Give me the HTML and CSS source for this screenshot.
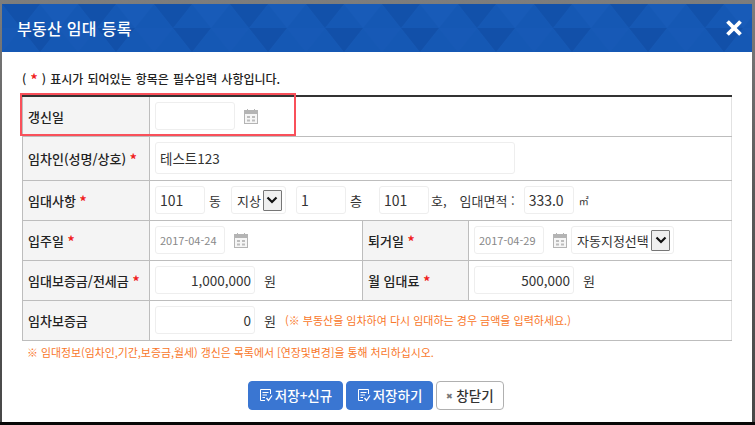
FILE: index.html
```html
<!DOCTYPE html>
<html lang="ko">
<head>
<meta charset="utf-8">
<title>부동산 임대 등록</title>
<link rel="stylesheet" href="styles.css">
</head>
<body>
<div class="modal">
  <header class="head">
    <svg class="head-bg" width="750" height="48" viewBox="0 0 750 48" aria-hidden="true">
      <defs>
        <pattern id="tri" width="76" height="48" patternUnits="userSpaceOnUse">
          <path d="M0 0H38L19 24Z" fill="#1251aa"/>
          <path d="M38 0H76L57 24Z" fill="#185bb8"/>
          <path d="M19 24H57L38 48Z" fill="#1250a9"/>
          <path d="M57 24H95L76 48Z" fill="#1759b6"/>
          <path d="M-19 24H19L0 48Z" fill="#1759b6"/>
        </pattern>
      </defs>
      <rect width="750" height="48" fill="url(#tri)"/>
    </svg>
    <h1 class="title">부동산 임대 등록</h1>
    <svg class="close" width="18" height="18" viewBox="0 0 18 18" aria-label="닫기"><path d="M3 3L15 15M15 3L3 15" stroke="#fff" stroke-width="4.4" stroke-linecap="square" fill="none" transform="translate(9 9) scale(.86) translate(-9 -9)"/></svg>
  </header>
  <div class="body">
    <p class="notice">( <span class="req">*</span> ) 표시가 되어있는 항목은 필수입력 사항입니다.</p>
    <div class="highlight"></div>
    <table class="form">
      <colgroup><col class="c1"><col class="c2"><col class="c3"><col class="c4"></colgroup>
      <tr class="r1">
        <th>갱신일</th>
        <td colspan="3"><span class="field"><input class="in w80" type="text"><svg class="cal" width="14" height="15" viewBox="0 0 14 15"><use href="#calicon"/></svg></span></td>
      </tr>
      <tr class="r2">
        <th>임차인(성명/상호) <span class="req">*</span></th>
        <td colspan="3"><input class="in wname" type="text" value="테스트123"></td>
      </tr>
      <tr>
        <th>임대사항 <span class="req">*</span></th>
        <td colspan="3">
          <span class="field">
            <input class="in w50" type="text" value="101"><span class="unit u5">동</span>
            <span class="sel s1"><span class="sel-t">지상</span><span class="arrow"><svg width="12" height="8" viewBox="0 0 12 8"><path d="M1.5 1.5L6 6L10.5 1.5" stroke="#111" stroke-width="2.2" fill="none"/></svg></span></span>
            <input class="in w50 ml10" type="text" value="1"><span class="unit u5">층</span>
            <input class="in w50 ml14" type="text" value="101"><span class="unit u2">호,</span><span class="unit u3">임대면적 :</span>
            <input class="in w50 ml8" type="text" value="333.0"><span class="unit u4">㎡</span>
          </span>
        </td>
      </tr>
      <tr>
        <th>입주일 <span class="req">*</span></th>
        <td><span class="field"><input class="in w70 date" type="text" value="2017-04-24"><svg class="cal" width="14" height="15" viewBox="0 0 14 15"><use href="#calicon"/></svg></span></td>
        <th>퇴거일 <span class="req">*</span></th>
        <td><span class="field"><input class="in w70 date" type="text" value="2017-04-29"><svg class="cal cal2" width="14" height="15" viewBox="0 0 14 15"><use href="#calicon"/></svg><span class="sel s2"><span class="sel-t">자동지정선택</span><span class="arrow"><svg width="12" height="8" viewBox="0 0 12 8"><path d="M1.5 1.5L6 6L10.5 1.5" stroke="#111" stroke-width="2.2" fill="none"/></svg></span></span></span></td>
      </tr>
      <tr>
        <th>임대보증금/전세금 <span class="req">*</span></th>
        <td><span class="field"><input class="in w100 num" type="text" value="1,000,000"><span class="unit u1">원</span></span></td>
        <th>월 임대료 <span class="req">*</span></th>
        <td><span class="field"><input class="in w100 num" type="text" value="500,000"><span class="unit u1">원</span></span></td>
      </tr>
      <tr>
        <th>임차보증금</th>
        <td colspan="3"><span class="field"><input class="in w100 num" type="text" value="0"><span class="unit u1">원</span><span class="hint">(※ 부동산을 임차하여 다시 임대하는 경우 금액을 입력하세요.)</span></span></td>
      </tr>
    </table>
    <p class="warn">※ 임대정보(임차인,기간,보증금,월세) 갱신은 목록에서 [연장및변경]을 통해 처리하십시오.</p>
    <div class="actions">
      <button class="btn primary w112" type="button"><svg class="bi" width="14" height="14" viewBox="0 0 14 14"><use href="#noteicon"/></svg>저장+신규</button>
      <button class="btn primary w87" type="button"><svg class="bi" width="14" height="14" viewBox="0 0 14 14"><use href="#noteicon"/></svg>저장하기</button>
      <button class="btn ghost" type="button"><span class="x">✖</span>창닫기</button>
    </div>
  </div>
</div>
<svg class="defs" width="0" height="0" aria-hidden="true">
  <defs>
    <g id="calicon">
      <rect x=".5" y="1.5" width="13" height="13" fill="#f6f6f6" stroke="#b4b4b4"/>
      <rect x="1" y="2" width="12" height="3" fill="#b4b4b4"/>
      <rect x="3" y="0" width="1" height="2" fill="#b4b4b4"/><rect x="10" y="0" width="1" height="2" fill="#b4b4b4"/>
      <path d="M3 7h3v2H3zM8 7h3v2H8zM3 10.500h3v2H3zM8 10.500h3v2H8z" fill="#bdbdbd"/>
    </g>
    <g id="noteicon" fill="none" stroke="#fff" stroke-width="1">
      <path d="M11.500 6V1.500H1.500V12.500H6"/>
      <path d="M3.500 4.500H9.500M3.500 7H8M3.500 9.500H6"/>
      <path d="M7.500 10L9.500 12.500L13 7.500" stroke-width="1.300"/>
    </g>
  </defs>
</svg>
</body>
</html>
```

FILE: styles.css
```css
* { box-sizing: border-box; }
html, body { margin: 0; padding: 0; height: 100%; }
body {
  width: 755px;
  height: 425px;
  overflow: hidden;
  background: linear-gradient(to bottom, #7d7d7d 0, #5a5a5a 45%, #484848 100%);
  padding: 4px 3px 3px 2px;
  font-family: "Noto Sans CJK KR", "Noto Sans", sans-serif;
  color: #222;
  box-shadow: inset 0 -3px 0 #080808;
}
.modal { width: 750px; height: 418px; background: #fff; }
.head {
  position: relative;
  height: 48px;
  background: #1558b4;
  display: flex;
  align-items: center;
  justify-content: space-between;
  padding: 0 9px 0 15px;
  overflow: hidden;
}
.head-bg { position: absolute; left: 0; top: 0; }
.title { position: relative; margin: 0; font-size: 16px; font-weight: 500; color: #fff; letter-spacing: .3px; }
.close { position: relative; }
.body { position: relative; padding: 0 20px; }
.notice { margin: 0; padding-top: 17px; height: 43px; font-size: 12px; line-height: 20px; font-weight: 500; color: #222; word-spacing: .8px; }
.req { color: #f01c1c; font-weight: 700; font-size: 14px; line-height: 1; vertical-align: -1px; }
.highlight { position: absolute; left: 18px; top: 41px; width: 276px; height: 43px; border: 2px solid #f9505a; pointer-events: none; z-index: 2; }
.form { width: 710px; border-collapse: collapse; table-layout: fixed; border-top: 2px solid #333; }
.c1 { width: 127px; }
.c2 { width: 213px; }
.c3 { width: 106px; }
.form tr { height: 40px; }
.form tr.r1 { height: 40px; }
.form tr.r2 { height: 44px; }
.form th, .form td { border: 1px solid #bdbdbd; padding: 0 5px; font-size: 13px; vertical-align: middle; }
.form td:last-child { border-right-color: #e2e2e2; }
.form tr:first-child th, .form tr:first-child td { border-top: 0; }
.form th { background: #f4f4f4; text-align: left; font-weight: 500; color: #222; padding-left: 5px; white-space: nowrap; font-size: 13px; }
.field { display: flex; align-items: center; white-space: nowrap; }
.in {
  display: block;
  height: 28px;
  border: 1px solid #eeeeee;
  border-radius: 3px;
  background: #fff;
  padding: 0 4px;
  font: 13.500px "Noto Sans CJK KR", "Noto Sans", sans-serif;
  color: #333;
  outline: 0;
}
.w80 { width: 80px; }
.wname { width: 360px; height: 32px; }
.w50 { width: 50px; font-size: 14px; }
.w70 { width: 70px; font-size: 11px; color: #888; padding: 0 4px; }
.w100 { width: 100px; }
.num { text-align: right; padding-right: 3px; }
.cal { margin-left: 9px; flex: none; }
.cal2 { margin-right: 4px; }
.ml10 { margin-left: 10px; }
.ml14 { margin-left: 17px; }
.ml8 { margin-left: 9px; }
.unit { font-size: 13px; color: #333; }
.u1 { margin-left: 9px; }
.u5 { margin-left: 4px; }
.u2 { margin-left: 2px; }
.u3 { margin-left: 13px; }
.u4 { margin-left: 5px; font-size: 10px; }
.sel {
  display: flex;
  align-items: center;
  height: 28px;
  border: 1px solid #eeeeee;
  border-radius: 3px;
  font-size: 13px;
  color: #333;
  padding-left: 5px;
}
.s1 { margin-left: 10px; width: 55px; }
.s2 { width: 103px; }
.sel-t { flex: 1; white-space: nowrap; }
.arrow {
  flex: none;
  width: 19px;
  height: 21px;
  margin-right: 3px;
  display: flex;
  align-items: center;
  justify-content: center;
  background: #efefef;
  border: 1px solid #767676;
  border-radius: 1px;
}
.hint { margin-left: 9px; font-size: 11px; color: #f9772a; }
.warn { margin: 0; height: 40px; padding: 3px 5px 0; font-size: 10.900px; line-height: 16px; color: #f9772a; }
.actions { display: flex; justify-content: center; gap: 3px; padding-right: 2px; }
.btn {
  height: 29px;
  border-radius: 4px;
  font: 500 13.500px "Noto Sans CJK KR", "Noto Sans", sans-serif;
  display: flex;
  align-items: center;
  justify-content: center;
  padding: 0;
}
.primary { background: #3a76d2; border: 1px solid #3a76d2; color: #fff; }
.w112 { width: 95px; }
.w87 { width: 87px; }
.ghost { width: 68px; background: #fff; border: 1px solid #b0b0b0; color: #333; }
.bi { margin-right: 2px; }
.x { font-size: 8px; color: #777; margin-right: 3px; }
.defs { position: absolute; }
```
